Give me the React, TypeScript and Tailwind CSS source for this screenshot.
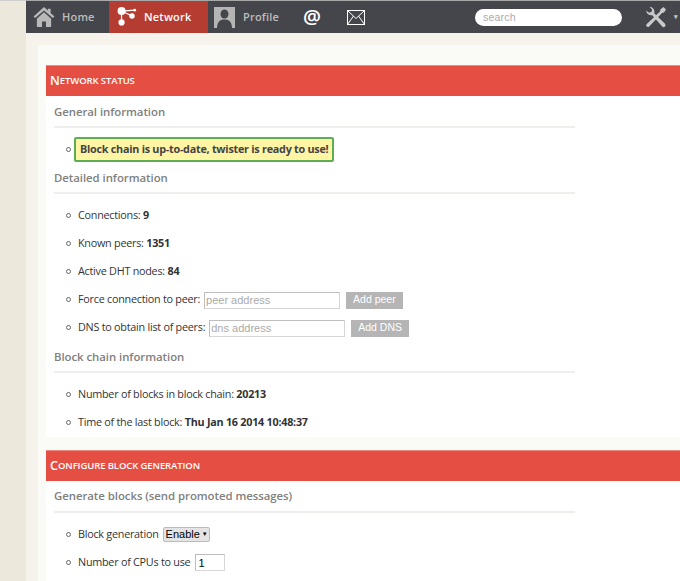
import type { ReactNode } from "react";

function HomeIcon() {
  return (
    <svg viewBox="0 0 20 20" className="w-[22px] h-[22px]" fill="#b9b9b9">
      <path d="M10 1 L0.5 9.5 L2 11 L10 4 L18 11 L19.5 9.5 L16 6.4 V2.5 H13.5 V4.2 Z" />
      <path d="M3.5 11.5 L10 5.7 L16.5 11.5 V19 H11.8 V14 H8.2 V19 H3.5 Z" />
    </svg>
  );
}

function NetworkIcon() {
  return (
    <svg viewBox="0 0 22 22" className="w-[20px] h-[20px]" fill="#fff" stroke="#fff">
      <circle cx="5" cy="4.5" r="4.4" stroke="none" />
      <circle cx="5" cy="17" r="3.4" stroke="none" />
      <circle cx="16.5" cy="10" r="3" stroke="none" />
      <circle cx="19.5" cy="3.5" r="1.5" stroke="none" />
      <path d="M5 4.5 L16.5 10 M5 17 L5 4.5 M5 4.5 L19.5 3.5" strokeWidth="1.3" fill="none" />
    </svg>
  );
}

function ProfileIcon() {
  return (
    <div className="w-[21px] h-[21px] bg-[#b5b5b5] overflow-hidden">
      <svg viewBox="0 0 21 21" className="w-[21px] h-[21px]" fill="#45464c">
        <ellipse cx="10.5" cy="7" rx="4" ry="4.6" />
        <path d="M3 21 C3 15 6 12.5 10.5 12.5 C15 12.5 18 15 18 21 Z" />
      </svg>
    </div>
  );
}

function MailIcon() {
  return (
    <svg viewBox="0 0 18 15" className="w-[18px] h-[15px]" fill="none" stroke="#fff" strokeWidth="1">
      <rect x="0.5" y="0.5" width="17" height="14" />
      <path d="M0.5 0.5 L9 8.5 L17.5 0.5 M0.5 14.5 L6.5 6 M17.5 14.5 L11.5 6" />
    </svg>
  );
}

function ToolsIcon() {
  return (
    <svg viewBox="0 0 22 22" className="w-[22px] h-[22px] -scale-x-100" fill="#c9c9c9">
      <path d="M1 3.5 L3.5 1 L6.5 3.2 L7 5.5 L20.5 18.2 Q21.5 19.5 20.3 20.6 Q19 21.6 17.8 20.5 L5 7 L3 6.6 Z" />
      <path d="M20.8 4.5 A5 5 0 0 1 14.8 9.2 L4.8 20.6 Q3.2 21.8 2 20.6 Q0.8 19.2 2 17.8 L12.8 7.2 A5 5 0 0 1 17.5 0.8 L14.8 3.8 L15.6 6 L18 6.8 Z" />
    </svg>
  );
}

function SectionHeader({ first, rest }: { first: string; rest: string }) {
  return (
    <div className="h-[31px] bg-[#e54e42] border-t border-[#ec8a80] flex items-center pl-[4px] text-white font-semibold">
      <span className="text-[12.5px]">{first}</span>
      <span className="text-[9.5px] tracking-[-0.1px] uppercase">{rest}</span>
    </div>
  );
}

function SubHeading({ children, className }: { children: ReactNode; className?: string }) {
  return (
    <div className={`w-[521px] border-b-2 border-[#eeeeec] text-[#808080] text-[11.4px] leading-[16px] font-semibold tracking-[-0.05px] ${className ?? ""}`}>
      {children}
    </div>
  );
}

function Item({ children, className }: { children: ReactNode; className?: string }) {
  return (
    <li className={`flex items-center h-[28px] text-[10.8px] tracking-[-0.25px] text-[#333333] ${className ?? ""}`}>
      <span className="w-[5px] h-[5px] rounded-full border border-[#666666] mr-[7px] ml-[12px]" />
      {children}
    </li>
  );
}

function PeerInput({ placeholder }: { placeholder: string }) {
  return (
    <input
      placeholder={placeholder}
      readOnly
      className="w-[136px] h-[17px] ml-[4px] mt-[2px] px-[1px] bg-white border border-[#d6d6d6] border-t-[#bdbdbd] border-l-[#bdbdbd] text-[11px] tracking-normal font-['Liberation_Sans',sans-serif] placeholder:text-[#aaaaaa] outline-none"
    />
  );
}

function GrayButton({ children }: { children: ReactNode }) {
  return (
    <button className="h-[17px] ml-[6px] mt-[2px] px-[7px] bg-[#b5b5b5] text-white text-[10.5px] tracking-normal font-['Liberation_Sans',sans-serif]">
      {children}
    </button>
  );
}

export default function App() {
  return (
    <div className="w-[680px] h-[581px] overflow-hidden flex bg-[#ece9dc] font-['Open_Sans',sans-serif]">
      <div className="w-[26px] shrink-0 border-t border-[#d0d0d0]" />
      <div className="flex-1 min-w-0 flex flex-col bg-[#f6f3ec]">
        {/* top bar */}
        <nav className="h-[33px] shrink-0 bg-[#45464c] border-t border-[#a8a8a8] flex items-stretch font-semibold text-[11px] tracking-[0.2px]">
          <a className="w-[83px] flex items-center pl-[7px] gap-[7px] text-[#bdbdbd]">
            <HomeIcon />
            Home
          </a>
          <a className="w-[99px] flex items-center pl-[8px] gap-[7px] bg-[#b53c31] text-white">
            <NetworkIcon />
            Network
          </a>
          <a className="w-[95px] flex items-center pl-[6px] gap-[8px] text-[#bdbdbd]">
            <ProfileIcon />
            Profile
          </a>
          <a className="w-[44px] flex items-center text-white text-[20px] font-semibold leading-none">@</a>
          <a className="flex items-center">
            <MailIcon />
          </a>
          <div className="ml-[110px] flex items-center">
            <input
              readOnly
              placeholder="search"
              className="w-[147px] h-[17px] rounded-full bg-white px-[8px] text-[10.5px] font-normal font-['Liberation_Sans',sans-serif] placeholder:text-[#aaaaaa] outline-none"
            />
          </div>
          <div className="ml-[23px] flex items-center">
            <ToolsIcon />
          </div>
          <div className="ml-[7px] flex items-center text-[#c9c9c9] text-[7px]">▾</div>
        </nav>

        <main className="flex-1 min-h-0 pl-[12px] pt-[12px]">
          <div className="h-full bg-[#fafaf6] pl-[8px] pt-[20px]">
            <section className="bg-white h-[372px]">
              <SectionHeader first="N" rest="etwork status" />
              <div className="pl-[8px]">
                <SubHeading className="pt-[8px] pb-[6px]">General information</SubHeading>
                <ul className="pt-[7px]">
                  <Item>
                    <span className="ml-[-4px] px-[4px] h-[25px] flex items-center bg-[#fff5a5] border-2 border-[#5cae50] rounded-[2px] font-bold text-[#444444]">
                      Block chain is up-to-date, twister is ready to use!
                    </span>
                  </Item>
                </ul>
                <SubHeading className="pt-[7px] pb-[6px]">Detailed information</SubHeading>
                <ul className="pt-[7px]">
                  <Item>
                    Connections:&nbsp;<b className="font-bold">9</b>
                  </Item>
                  <Item>
                    Known peers:&nbsp;<b className="font-bold">1351</b>
                  </Item>
                  <Item>
                    Active DHT nodes:&nbsp;<b className="font-bold">84</b>
                  </Item>
                  <Item>
                    Force connection to peer:
                    <PeerInput placeholder="peer address" />
                    <GrayButton>Add peer</GrayButton>
                  </Item>
                  <Item>
                    DNS to obtain list of peers:
                    <PeerInput placeholder="dns address" />
                    <GrayButton>Add DNS</GrayButton>
                  </Item>
                </ul>
                <SubHeading className="pt-[8px] pb-[6px]">Block chain information</SubHeading>
                <ul className="pt-[7px]">
                  <Item>
                    Number of blocks in block chain:&nbsp;<b className="font-bold">20213</b>
                  </Item>
                  <Item>
                    Time of the last block:&nbsp;<b className="font-bold">Thu Jan 16 2014 10:48:37</b>
                  </Item>
                </ul>
              </div>
            </section>
            <section className="bg-white mt-[13px] h-[200px]">
              <SectionHeader first="C" rest="onfigure block generation" />
              <div className="pl-[8px]">
                <SubHeading className="pt-[7px] pb-[7px]">Generate blocks (send promoted messages)</SubHeading>
                <ul className="pt-[7px]">
                  <Item>
                    Block generation
                    <div className="relative ml-[4px]">
                      <select className="appearance-none block pl-[2px] h-[15px] w-[47px] bg-[#e4e4e4] border border-[#bbbbbb] rounded-[2px] text-[11px] leading-[13px] text-black tracking-normal font-['Liberation_Sans',sans-serif]">
                        <option>Enable</option>
                      </select>
                      <span className="absolute right-[2px] top-[3px] text-[6px] text-black leading-[8px]">▼</span>
                    </div>
                  </Item>
                  <Item>
                    Number of CPUs to use
                    <input
                      readOnly
                      value="1"
                      className="ml-[5px] mt-[1px] w-[30px] h-[17px] px-[2px] border border-[#d6d6d6] border-t-[#bdbdbd] border-l-[#bdbdbd] text-[11px] text-black tracking-normal font-['Liberation_Sans',sans-serif] outline-none"
                    />
                  </Item>
                </ul>
              </div>
            </section>
          </div>
        </main>
      </div>
    </div>
  );
}
